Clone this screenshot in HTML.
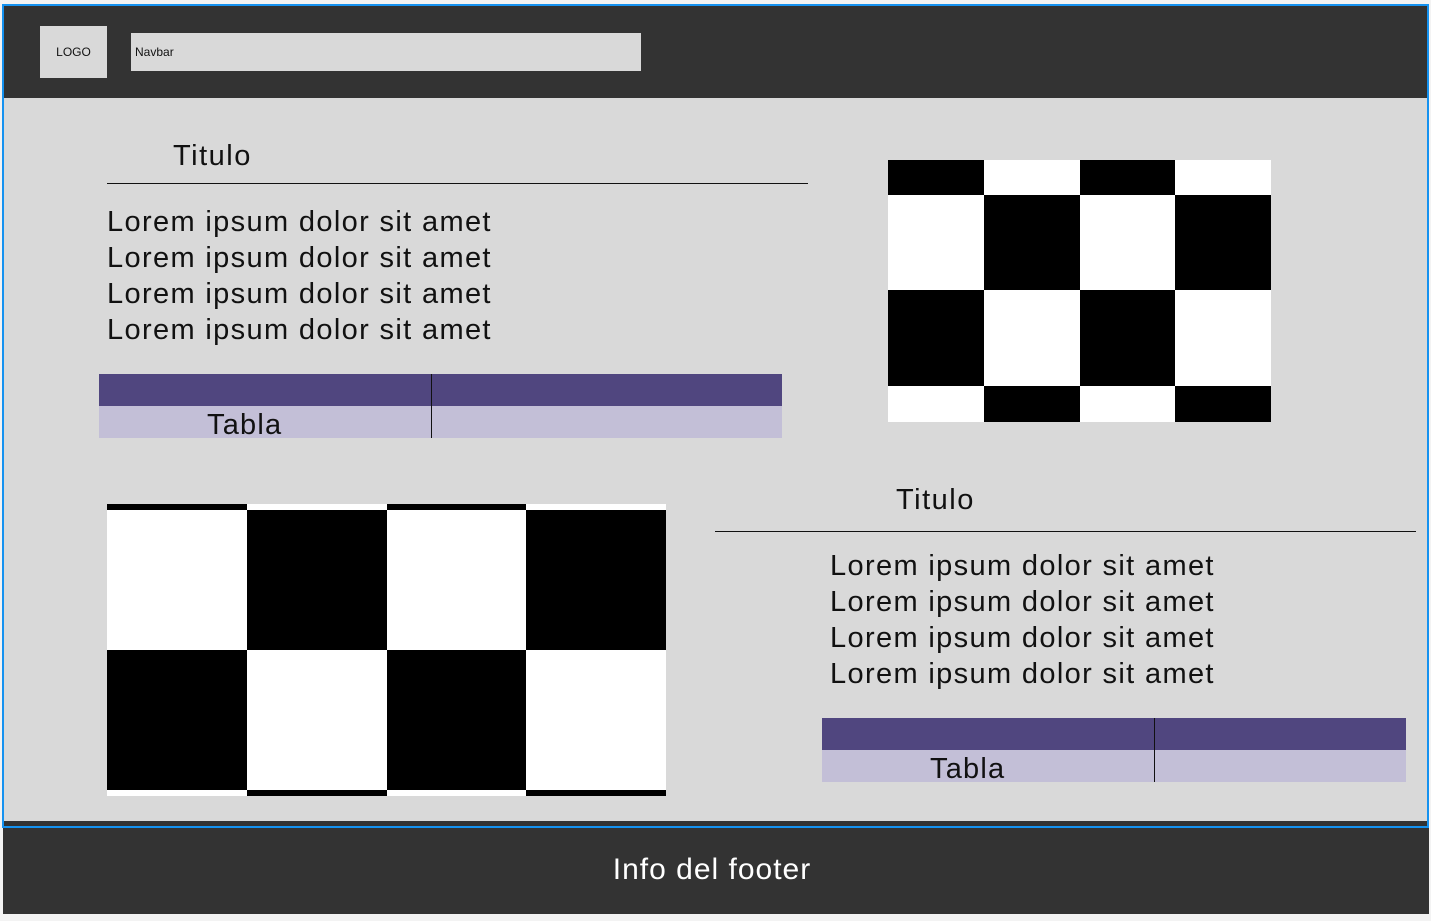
<!DOCTYPE html>
<html><head><meta charset="utf-8"><style>
*{margin:0;padding:0;box-sizing:border-box}
body{width:1431px;height:921px;background:#f3f3f3;position:relative;overflow:hidden;font-family:"Liberation Sans",sans-serif;color:#111}
.a{position:absolute}
.t{font-size:29px;white-space:nowrap;line-height:36px;letter-spacing:1.35px}
</style></head><body>
<div class="a" style="left:2px;top:4px;width:1427px;height:824px;border:2px solid #1592f0;background:#d9d9d9"></div>
<div class="a" style="left:4px;top:6px;width:1423px;height:92px;background:#333"></div>
<div class="a" style="left:40px;top:26px;width:67px;height:52px;background:#d9d9d9;font-size:12px;line-height:53px;text-align:center">LOGO</div>
<div class="a" style="left:131px;top:33px;width:510px;height:38px;background:#d9d9d9;font-size:12px;line-height:39px;padding-left:4px">Navbar</div>

<div class="a t" style="left:173px;top:138px;letter-spacing:1.5px">Titulo</div>
<div class="a" style="left:107px;top:183px;width:701px;height:1px;background:#111"></div>
<div class="a t" style="left:107px;top:204px">Lorem ipsum dolor sit amet<br>Lorem ipsum dolor sit amet<br>Lorem ipsum dolor sit amet<br>Lorem ipsum dolor sit amet</div>
<div class="a" style="left:99px;top:374px;width:683px;height:32px;background:#50467f"></div>
<div class="a" style="left:99px;top:406px;width:683px;height:32px;background:#c3bfd7"></div>
<div class="a" style="left:431px;top:374px;width:1px;height:64px;background:#111"></div>
<div class="a t" style="left:207px;top:406px;line-height:38px;letter-spacing:1.2px">Tabla</div>

<svg class="a" style="left:888px;top:160px" width="383" height="262"><rect width="383" height="262" fill="#fff"/>
<g fill="#000">
<rect x="0" y="0" width="96" height="35"/><rect x="192" y="0" width="95" height="35"/>
<rect x="96" y="35" width="96" height="95"/><rect x="287" y="35" width="96" height="95"/>
<rect x="0" y="130" width="96" height="96"/><rect x="192" y="130" width="95" height="96"/>
<rect x="96" y="226" width="96" height="36"/><rect x="287" y="226" width="96" height="36"/>
</g></svg>

<svg class="a" style="left:107px;top:504px" width="559" height="292"><rect width="559" height="292" fill="#fff"/>
<g fill="#000">
<rect x="0" y="0" width="140" height="6"/><rect x="280" y="0" width="139" height="6"/>
<rect x="140" y="6" width="140" height="140"/><rect x="419" y="6" width="140" height="140"/>
<rect x="0" y="146" width="140" height="140"/><rect x="280" y="146" width="139" height="140"/>
<rect x="140" y="286" width="140" height="6"/><rect x="419" y="286" width="140" height="6"/>
</g></svg>

<div class="a t" style="left:896px;top:482px;letter-spacing:1.5px">Titulo</div>
<div class="a" style="left:715px;top:531px;width:701px;height:1px;background:#111"></div>
<div class="a t" style="left:830px;top:548px">Lorem ipsum dolor sit amet<br>Lorem ipsum dolor sit amet<br>Lorem ipsum dolor sit amet<br>Lorem ipsum dolor sit amet</div>
<div class="a" style="left:822px;top:718px;width:584px;height:32px;background:#50467f"></div>
<div class="a" style="left:822px;top:750px;width:584px;height:32px;background:#c3bfd7"></div>
<div class="a" style="left:1154px;top:718px;width:1px;height:64px;background:#111"></div>
<div class="a t" style="left:930px;top:750px;line-height:38px;letter-spacing:1.2px">Tabla</div>

<div class="a" style="left:4px;top:821px;width:1423px;height:5px;background:#333"></div>
<div class="a" style="left:3px;top:828px;width:1426px;height:86px;background:#333;color:#fff;font-size:30px;text-align:center;line-height:84px;padding-right:8px;letter-spacing:1px">Info del footer</div>
</body></html>
